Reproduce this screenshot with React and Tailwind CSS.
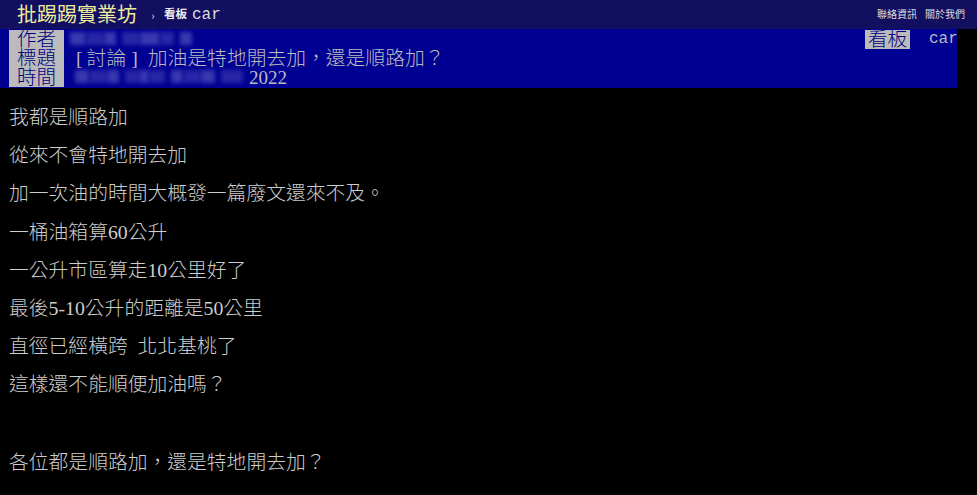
import React from "react";

const font = { fontFamily: '"Liberation Serif", "Noto Sans CJK TC", serif' };
const mono = { fontFamily: '"Liberation Mono", monospace' };

function Label({children}) {
    return (
        <span className="inline-flex items-center justify-center bg-[#bbbbbb] text-[#000080] w-[55px] h-[19px] text-[19.5px] leading-[19px] font-light">{children}</span>
    );
}

function Mosaic({widths}) {
    return (
        <span className="inline-flex items-center h-[19px]">
            {widths.map((w, i) => (
                <span key={i} className={`${i % 2 ? 'bg-[#2626a6]' : 'bg-[#3838b0]'} h-[13px] blur-[2px]`} style={{width: w, marginRight: i % 3 === 2 ? 6 : 0}} />
            ))}
        </span>
    );
}

const lines = [
    '我都是順路加',
    '從來不會特地開去加',
    '加一次油的時間大概發一篇廢文還來不及。',
    '一桶油箱算60公升',
    '一公升市區算走10公里好了',
    '最後5-10公升的距離是50公里',
    '直徑已經橫跨  北北基桃了',
    '這樣還不能順便加油嗎？',
];

function App() {
    return (
        <div className="w-[977px] h-[495px] bg-black overflow-hidden" style={font}>
            <div className="h-[29px] bg-[#120e60] flex items-center pl-[17px] pr-[12px]">
                <span className="text-[20px] leading-none text-[#eeee9c]">批踢踢實業坊</span>
                <span className="text-[12px] text-[#cccccc] ml-[14px]">›</span>
                <span className="text-[11.5px] text-[#eeeeee] ml-[9px] font-bold">看板</span>
                <span className="text-[16px] text-[#dddddd] ml-[5px]" style={mono}>car</span>
                <div className="ml-auto flex gap-[8px] text-[10px] text-[#dddddd]">
                    <span>聯絡資訊</span>
                    <span>關於我們</span>
                </div>
            </div>
            <div className="w-[957px] bg-[#000092] pt-[1px] pb-[1px] text-[#bbbbbb] pl-[9px]">
                <div className="flex items-center h-[19px]">
                    <Label>作者</Label>
                    <span className="ml-[6px]"><Mosaic widths={[16, 18, 12, 18, 20, 14, 12]} /></span>
                    <div className="ml-auto flex items-center">
                        <span className="inline-flex items-center justify-center bg-[#bbbbbb] text-[#000080] w-[45px] h-[19px] text-[19.5px] leading-[19px] font-light">看板</span>
                        <span className="ml-[19px] text-[16px] leading-[19px] w-[28px]" style={mono}>car</span>
                    </div>
                </div>
                <div className="flex items-center h-[19px] text-[19.8px] leading-[19px] font-light whitespace-pre">
                    <Label>標題</Label>
                    <span className="ml-[12px]">[</span>
                    <span className="ml-[4px]">討論</span>
                    <span className="ml-[5px]">]</span>
                    <span className="ml-[10px]">加油是特地開去加，還是順路加？</span>
                </div>
                <div className="flex items-center h-[19px]">
                    <Label>時間</Label>
                    <span className="ml-[11px]"><Mosaic widths={[14, 18, 12, 14, 10, 16, 12, 18, 14, 22]} /></span>
                    <span className="ml-[6px] text-[19px] leading-[19px]">2022</span>
                </div>
            </div>
            <div className="pl-[9px] pt-[20px] text-[19.8px] leading-[19.1px] text-[#cccccc] font-light">
                {lines.map((l, i) => (
                    <div key={i} className="h-[38.2px] whitespace-pre">{l}</div>
                ))}
                <div className="h-[39px]"></div>
                <div className="whitespace-pre">各位都是順路加，還是特地開去加？</div>
            </div>
        </div>
    );
}

export default App;
